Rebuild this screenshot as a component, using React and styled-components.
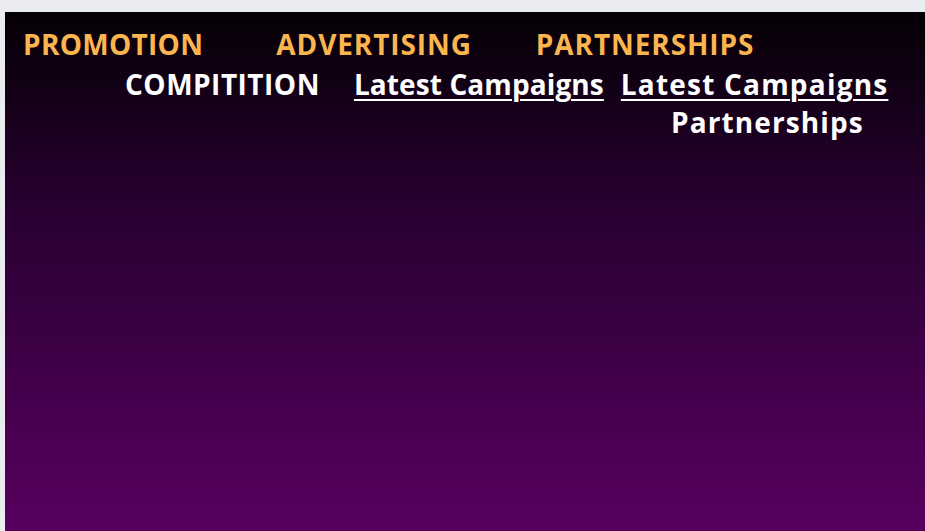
import React from 'react';
import styled, { createGlobalStyle } from 'styled-components';

const GlobalStyle = createGlobalStyle`
  html, body {
    margin: 0;
    padding: 0;
    background: #ebecf0;
  }
  body {
    font-family: "Open Sans", "Noto Sans", Arial, sans-serif;
  }
`;

const Page = styled.div`
  padding: 12px 0 0 5px;
  height: 531px;
  box-sizing: border-box;
`;

const Panel = styled.div`
  height: 100%;
  background: linear-gradient(180deg, #050005 0%, #2a0033 40%, #58005f 100%);
  padding-top: 18px;
  box-sizing: border-box;
`;

const Row = styled.div`
  display: flex;
  align-items: baseline;
  padding-left: ${p => p.$indent}px;
  height: ${p => p.$height || 40}px;
`;

const NavItem = styled.a`
  font-size: 28px;
  font-weight: 700;
  line-height: 1;
  letter-spacing: ${p => p.$track || 0}px;
  text-decoration: ${p => (p.$underline ? 'underline' : 'none')};
  text-decoration-thickness: 2px;
  text-underline-offset: 4px;
  color: ${p => (p.$accent ? '#fbb54f' : '#ffffff')};
  margin-right: ${p => p.$space || 0}px;
  white-space: nowrap;
  cursor: pointer;
`;

export default function App() {
  return (
    <>
      <GlobalStyle />
      <Page>
        <Panel>
          <Row $indent={18}>
            <NavItem $accent $track={0.3} $space={73}>PROMOTION</NavItem>
            <NavItem $accent $track={0.9} $space={64}>ADVERTISING</NavItem>
            <NavItem $accent $track={0.9}>PARTNERSHIPS</NavItem>
          </Row>
          <Row $indent={120} $height={38}>
            <NavItem $track={0.5} $space={34}>COMPITITION</NavItem>
            <NavItem $underline $track={0.1} $space={17}>Latest Campaigns</NavItem>
            <NavItem $underline $track={1.2}>Latest Campaigns</NavItem>
          </Row>
          <Row $indent={666}>
            <NavItem $track={1.1}>Partnerships</NavItem>
          </Row>
        </Panel>
      </Page>
    </>
  );
}
